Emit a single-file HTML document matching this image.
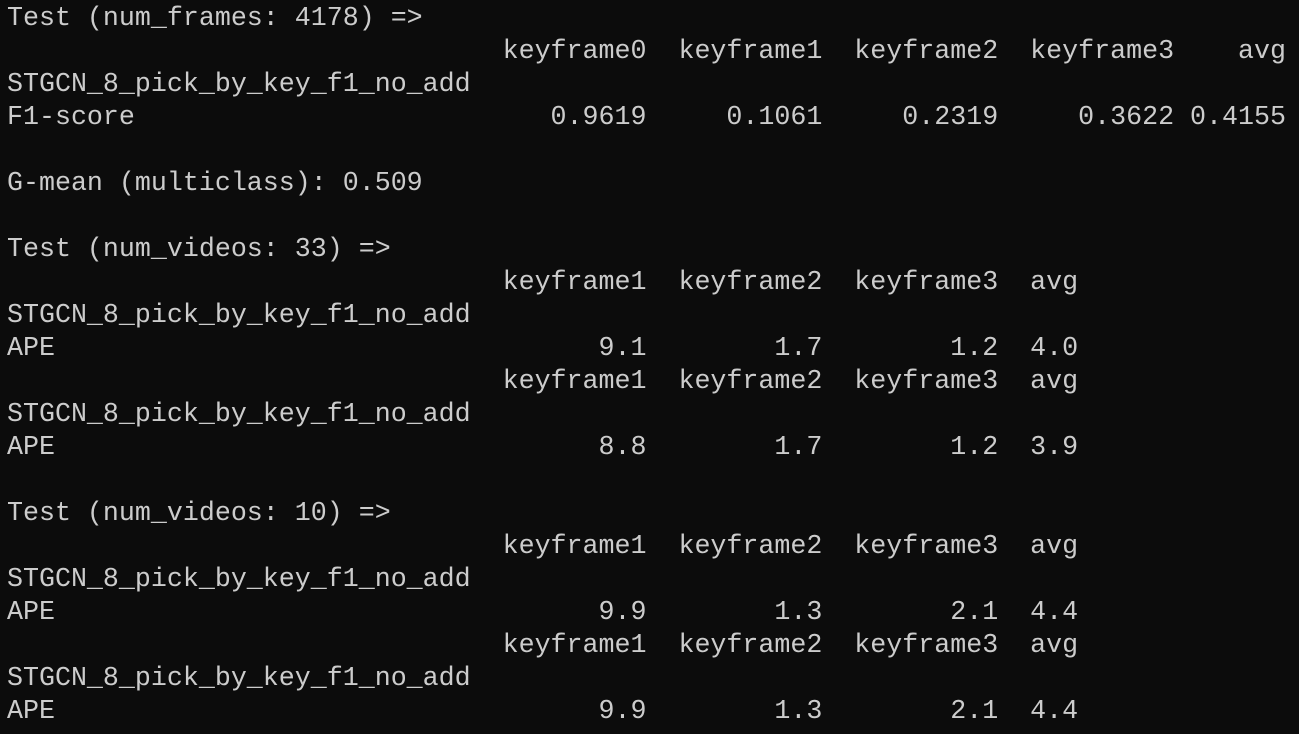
<!DOCTYPE html>
<html><head><meta charset="utf-8"><style>
html,body{margin:0;padding:0;background:#0c0c0c;width:1299px;height:734px;overflow:hidden}
pre{margin:0;padding:3px 0 0 7px;font-family:"Liberation Mono",monospace;font-size:26.65px;line-height:33px;color:#cccccc;white-space:pre}
</style></head><body><pre>Test (num_frames: 4178) =&gt;
                               keyframe0  keyframe1  keyframe2  keyframe3    avg
STGCN_8_pick_by_key_f1_no_add
F1-score                          0.9619     0.1061     0.2319     0.3622 0.4155

G-mean (multiclass): 0.509

Test (num_videos: 33) =&gt;
                               keyframe1  keyframe2  keyframe3  avg
STGCN_8_pick_by_key_f1_no_add
APE                                  9.1        1.7        1.2  4.0
                               keyframe1  keyframe2  keyframe3  avg
STGCN_8_pick_by_key_f1_no_add
APE                                  8.8        1.7        1.2  3.9

Test (num_videos: 10) =&gt;
                               keyframe1  keyframe2  keyframe3  avg
STGCN_8_pick_by_key_f1_no_add
APE                                  9.9        1.3        2.1  4.4
                               keyframe1  keyframe2  keyframe3  avg
STGCN_8_pick_by_key_f1_no_add
APE                                  9.9        1.3        2.1  4.4</pre></body></html>
